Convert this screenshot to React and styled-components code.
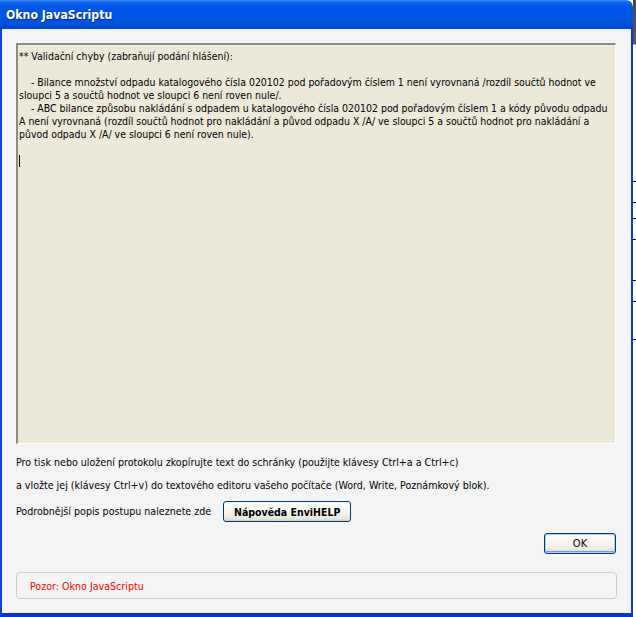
import React from 'react';
import styled, { createGlobalStyle } from 'styled-components';

const GlobalStyle = createGlobalStyle`
  html, body {
    margin: 0;
    padding: 0;
    background: #ffffff;
  }
  body {
    font-family: "DejaVu Sans Condensed", "DejaVu Sans", sans-serif;
  }
`;

const Page = styled.div`
  display: flex;
  width: 636px;
  height: 617px;
  overflow: hidden;
`;

const Window = styled.div`
  width: 633px;
  height: 617px;
  display: flex;
  flex-direction: column;
  border-top-right-radius: 7px;
  overflow: hidden;
`;

const TitleBar = styled.div`
  height: 29px;
  flex: none;
  display: flex;
  align-items: center;
  padding-left: 6px;
  background: linear-gradient(
    to bottom,
    #3d8ff8 0%,
    #0f63ec 8%,
    #0058e8 25%,
    #0055e4 60%,
    #0050dc 85%,
    #0046c8 100%
  );
`;

const Title = styled.span`
  color: #ffffff;
  font-family: "DejaVu Sans Condensed", "DejaVu Sans", sans-serif;
  font-weight: bold;
  font-size: 12.2px;
  text-shadow: 1px 1px 0 #0a2a8c;
`;

const Frame = styled.div`
  flex: 1;
  display: flex;
  flex-direction: column;
  border-left: 2px solid #0b45d8;
  border-right: 2px solid #0a3fd2;
  border-bottom: 4px solid #0733c8;
  background: #f4f4f4;
  padding: 14px 15px 10px 14px;
`;

const Editor = styled.div`
  height: 393px;
  flex: none;
  background: #ece9d8;
  border-top: 2px solid #8d8b80;
  border-left: 2px solid #8d8b80;
  border-right: 1px solid #ffffff;
  border-bottom: 1px solid #ffffff;
  padding: 5px 1px 0 1px;
  font-size: 10.45px;
  line-height: 13px;
  color: #000000;
  overflow: hidden;
`;

const Line = styled.div`
  white-space: pre;
  height: 13px;
`;

const Caret = styled.span`
  display: inline-block;
  width: 1px;
  height: 12px;
  margin-top: 1px;
  background: #000000;
  vertical-align: top;
`;

const Info = styled.div`
  font-size: 10.6px;
  line-height: 13px;
  color: #000000;
  margin-top: ${p => p.$top || 0}px;
  display: flex;
  align-items: center;
`;

const Button = styled.button`
  font-family: "DejaVu Sans Condensed", "DejaVu Sans", sans-serif;
  font-size: ${p => (p.$bold ? 10.5 : 11)}px;
  color: #000000;
  font-weight: ${p => (p.$bold ? 'bold' : 'normal')};
  width: ${p => p.$w}px;
  height: ${p => p.$h}px;
  padding: 0;
  border: 1px solid #003c74;
  border-radius: 3px;
  background: linear-gradient(to bottom, #ffffff 0%, #f4f3ee 60%, #e6e3d6 90%, #d6d0c5 100%);
  box-shadow: ${p => (p.$focus ? 'inset 0 0 0 1px #b4cdf5, inset 0 -1px 0 1px #6e9ae8' : 'none')};
`;

const HelpButton = styled(Button)`
  margin-left: 12px;
`;

const ButtonRow = styled.div`
  display: flex;
  justify-content: flex-end;
  margin-top: 11px;
`;

const Status = styled.div`
  margin-top: 18px;
  height: 25px;
  margin-right: -1px;
  border: 1px solid #d0d0bf;
  border-radius: 4px;
  display: flex;
  align-items: center;
  padding-left: 13px;
  font-size: 10.6px;
  color: #ff0000;
`;

const Backdrop = styled.div`
  width: 3px;
  flex: none;
  display: flex;
  flex-direction: column;
  background: linear-gradient(to bottom, #4a4a4a 0, #5a5a5a 44px, #ffffff 45px);
`;

const Tick = styled.div`
  margin-top: ${p => p.$top}px;
  height: 1px;
  width: 3px;
  background: #000000;
`;

const lines = [
  '** Validační chyby (zabraňují podání hlášení):',
  '',
  '    - Bilance množství odpadu katalogového čísla 020102 pod pořadovým číslem 1 není vyrovnaná /rozdíl součtů hodnot ve',
  'sloupci 5 a součtů hodnot ve sloupci 6 není roven nule/.',
  '    - ABC bilance způsobu nakládání s odpadem u katalogového čísla 020102 pod pořadovým číslem 1 a kódy původu odpadu',
  'A není vyrovnaná (rozdíl součtů hodnot pro nakládání a původ odpadu X /A/ ve sloupci 5 a součtů hodnot pro nakládání a',
  'původ odpadu X /A/ ve sloupci 6 není roven nule).',
  '',
];

export default function App() {
  return (
    <>
      <GlobalStyle />
      <Page>
        <Window>
          <TitleBar>
            <Title>Okno JavaScriptu</Title>
          </TitleBar>
          <Frame>
            <Editor>
              {lines.map((l, i) => (
                <Line key={i}>{l}</Line>
              ))}
              <Line>
                <Caret />
              </Line>
            </Editor>
            <Info $top={12}>
              Pro tisk nebo uložení protokolu zkopírujte text do schránky (použijte klávesy Ctrl+a a Ctrl+c)
            </Info>
            <Info $top={10}>
              a vložte jej (klávesy Ctrl+v) do textového editoru vašeho počítače (Word, Write, Poznámkový blok).
            </Info>
            <Info $top={9}>
              Podrobnější popis postupu naleznete zde
              <HelpButton $bold $w={128} $h={21}>
                Nápověda EnviHELP
              </HelpButton>
            </Info>
            <ButtonRow>
              <Button $focus $w={72} $h={21}>
                OK
              </Button>
            </ButtonRow>
            <Status>Pozor: Okno JavaScriptu</Status>
          </Frame>
        </Window>
        <Backdrop>
          <Tick $top={181} />
          <Tick $top={20} />
          <Tick $top={15} />
          <Tick $top={20} />
          <Tick $top={40} />
          <Tick $top={20} />
          <Tick $top={37} />
        </Backdrop>
      </Page>
    </>
  );
}
